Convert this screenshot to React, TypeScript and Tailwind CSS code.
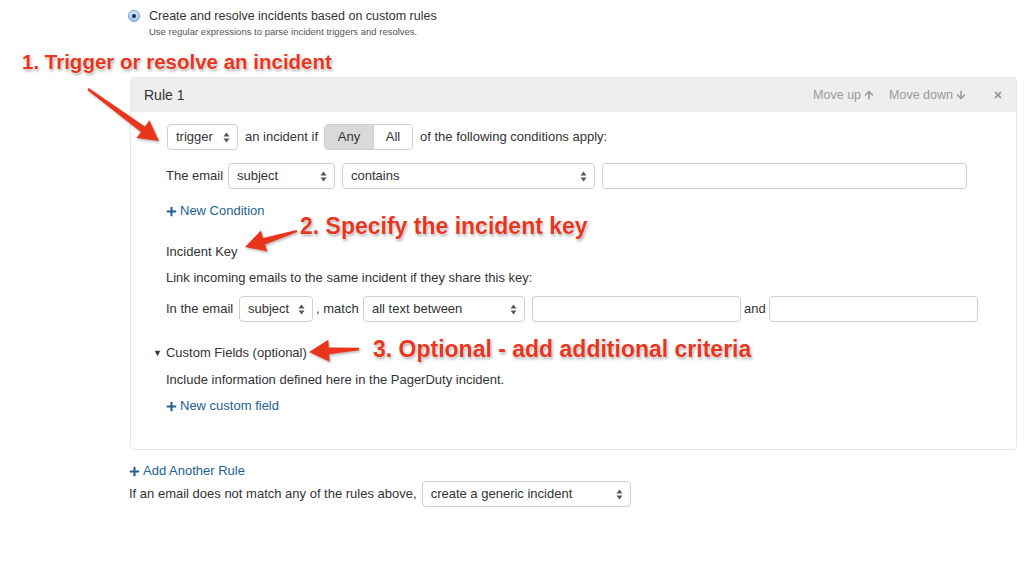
import { FaArrowUp, FaArrowDown, FaTimes, FaPlus } from "react-icons/fa";

const RED = "#e8351d";

function Updown() {
  return (
    <svg width="7" height="11" viewBox="0 0 7 11" aria-hidden="true" className="shrink-0">
      <path d="M3.5 0.5 L6.5 4.5 L0.5 4.5 Z" fill="#555" />
      <path d="M3.5 10.5 L6.5 6.5 L0.5 6.5 Z" fill="#555" />
    </svg>
  );
}

function Select({ label, w }: { label: string; w: string }) {
  return (
    <div
      className={`flex h-[26px] ${w} shrink-0 items-center justify-between rounded-[4px] border border-[#cfcfcf] bg-white pl-[8px] pr-[7px] text-[13px] text-[#333]`}
    >
      <span className="whitespace-nowrap">{label}</span>
      <Updown />
    </div>
  );
}

function Input({ w }: { w: string }) {
  return <div className={`h-[26px] ${w} shrink-0 rounded-[4px] border border-[#cfcfcf] bg-white`} />;
}

function AddLink({ label }: { label: string }) {
  return (
    <div className="flex items-center gap-[3px] text-[13px] leading-[16px] text-[#245f91]">
      <FaPlus className="size-[11px]" />
      <span>{label}</span>
    </div>
  );
}

function Note({ text, className }: { text: string; className: string }) {
  return (
    <div
      className={`pointer-events-none absolute whitespace-nowrap font-['Liberation_Sans',Arial,sans-serif] font-bold leading-none text-[#e8351d] [text-shadow:0_0_2px_#fff,0_0_1px_#fff,1px_2px_3px_rgba(0,0,0,0.35)] ${className}`}
    >
      {text}
    </div>
  );
}

// arrow polygon from tail to tip
function arrowPoints(tx: number, ty: number, hx: number, hy: number) {
  const dx = hx - tx;
  const dy = hy - ty;
  const len = Math.hypot(dx, dy);
  const ux = dx / len;
  const uy = dy / len;
  const nx = -uy;
  const ny = ux;
  const headLen = Math.min(20, len * 0.45);
  const headHalf = 11;
  const tailHalf = 1.2;
  const neckHalf = 3.4;
  const bx = hx - ux * headLen;
  const by = hy - uy * headLen;
  const pts = [
    [tx + nx * tailHalf, ty + ny * tailHalf],
    [bx + nx * neckHalf, by + ny * neckHalf],
    [bx + nx * headHalf, by + ny * headHalf],
    [hx, hy],
    [bx - nx * headHalf, by - ny * headHalf],
    [bx - nx * neckHalf, by - ny * neckHalf],
    [tx - nx * tailHalf, ty - ny * tailHalf],
  ];
  return pts.map((p) => p.map((v) => v.toFixed(1)).join(",")).join(" ");
}

export default function App() {
  return (
    <div className="relative h-[575px] w-[1024px] overflow-hidden bg-white font-['Liberation_Sans',Arial,sans-serif] text-[#333]">
      <div className="pl-[128px] pt-[8px]">
        <div className="flex items-center gap-[9px]">
          <span className="flex size-[12px] items-center justify-center rounded-full border border-[#6a9fd6] bg-gradient-to-b from-[#d8e9fb] to-[#9cc4ee]">
            <span className="size-[4px] rounded-full bg-[#1d2f45]" />
          </span>
          <span className="text-[12.5px] leading-[16px]">Create and resolve incidents based on custom rules</span>
        </div>
        <div className="pl-[21px] pt-[1px] text-[9.5px] leading-[14px] text-[#555]">
          Use regular expressions to parse incident triggers and resolves.
        </div>
      </div>

      <div className="ml-[130px] mt-[38px] w-[887px] rounded-[4px] border border-[#e7e7e7]">
        <div className="flex h-[34px] items-center justify-between rounded-t-[4px] bg-[#eeeeee] pl-[13px] pr-[13px]">
          <span className="text-[14px] text-[#333]">Rule 1</span>
          <div className="flex items-center text-[12.5px] text-[#9a9a9a]">
            <span>Move up</span>
            <FaArrowUp className="ml-[3px] size-[10px]" />
            <span className="ml-[15px]">Move down</span>
            <FaArrowDown className="ml-[3px] size-[10px]" />
            <FaTimes className="ml-[27px] size-[10px]" />
          </div>
        </div>

        <div className="pb-[35px] pl-[35px] pt-[12px] text-[13px]">
          <div className="flex items-center whitespace-nowrap">
            <div className="ml-px">
              <Select label="trigger" w="w-[71px]" />
            </div>
            <span className="ml-[7px]">an incident if</span>
            <div className="ml-[6px] flex h-[26px] overflow-hidden rounded-[4px] border border-[#cfcfcf]">
              <span className="flex w-[48px] items-center justify-center bg-[#d9d9d9]">Any</span>
              <span className="flex w-[39px] items-center justify-center border-l border-[#cfcfcf] bg-white">All</span>
            </div>
            <span className="ml-[7px]">of the following conditions apply:</span>
          </div>

          <div className="mt-[13px] flex items-center gap-[7px] whitespace-nowrap">
            <span className="w-[55px] shrink-0">The email</span>
            <Select label="subject" w="w-[107px]" />
            <Select label="contains" w="w-[253px]" />
            <Input w="w-[365px]" />
          </div>

          <div className="mt-[14px]">
            <AddLink label="New Condition" />
          </div>

          <div className="mt-[25px] leading-[16px]">Incident Key</div>
          <div className="mt-[10px] leading-[16px]">Link incoming emails to the same incident if they share this key:</div>

          <div className="mt-[10px] flex items-center whitespace-nowrap">
            <span className="w-[73px] shrink-0">In the email</span>
            <Select label="subject" w="w-[74px]" />
            <span className="ml-[3px] w-[47px] shrink-0">, match</span>
            <Select label="all text between" w="w-[162px]" />
            <div className="ml-[7px]">
              <Input w="w-[209px]" />
            </div>
            <span className="ml-[3px] w-[25px] shrink-0">and</span>
            <Input w="w-[209px]" />
          </div>

          <div className="-ml-[13px] mt-[23px] flex items-center gap-[4px] leading-[16px]">
            <span className="text-[9px]">▼</span>
            <span>Custom Fields (optional)</span>
          </div>
          <div className="mt-[11px] leading-[16px]">Include information defined here in the PagerDuty incident.</div>
          <div className="mt-[10px]">
            <AddLink label="New custom field" />
          </div>
        </div>
      </div>

      <div className="ml-[129px] mt-[13px]">
        <AddLink label="Add Another Rule" />
        <div className="mt-[2px] flex items-center gap-[5px] whitespace-nowrap text-[13px]">
          <span>If an email does not match any of the rules above,</span>
          <Select label="create a generic incident" w="w-[209px]" />
        </div>
      </div>

      <Note text="1. Trigger or resolve an incident" className="left-[22px] top-[52px] text-[20.5px]" />
      <Note text="2. Specify the incident key" className="left-[300px] top-[215px] text-[23px]" />
      <Note text="3. Optional - add additional criteria" className="left-[373px] top-[338px] text-[23px]" />

      <svg
        className="pointer-events-none absolute left-0 top-0"
        width="1024"
        height="575"
        viewBox="0 0 1024 575"
        aria-hidden="true"
      >
        <defs>
          <filter id="sh" x="-20%" y="-20%" width="140%" height="140%">
            <feDropShadow dx="1" dy="1.5" stdDeviation="1.2" floodColor="#000" floodOpacity="0.3" />
          </filter>
        </defs>
        <g fill={RED} filter="url(#sh)">
          <polygon points={arrowPoints(88, 89, 159, 141)} />
          <polygon points={arrowPoints(297, 231, 245, 247)} />
          <polygon points={arrowPoints(359, 349, 309, 352)} />
        </g>
      </svg>
    </div>
  );
}
